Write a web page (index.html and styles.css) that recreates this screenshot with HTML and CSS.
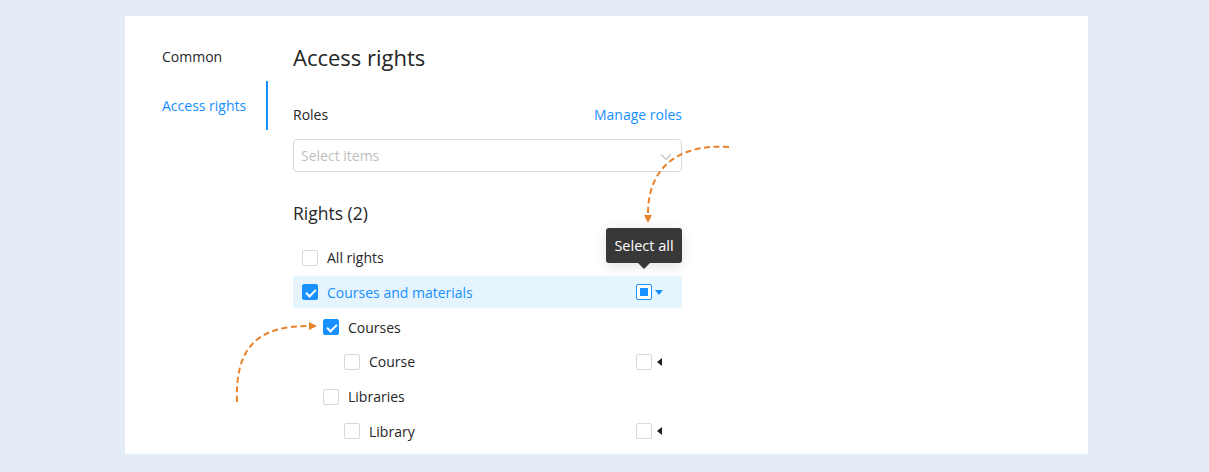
FILE: index.html
```html
<!DOCTYPE html>
<html lang="en">
<head>
<meta charset="utf-8">
<title>Access rights</title>
<link rel="stylesheet" href="styles.css">
</head>
<body>
<div class="card">
  <nav class="side-nav">
    <div class="nav-item">Common</div>
    <div class="nav-item active">Access rights</div>
  </nav>
  <main class="content">
    <h1 class="page-title">Access rights</h1>
    <div class="field-head">
      <span class="field-label">Roles</span>
      <a class="link">Manage roles</a>
    </div>
    <div class="select">
      <span class="placeholder">Select items</span>
      <svg class="chevron" width="12" height="8" viewBox="0 0 12 8"><path d="M1 1.5 L6 6.5 L11 1.5" fill="none" stroke="#c4c4c4" stroke-width="1.2"/></svg>
    </div>
    <h2 class="section-title">Rights (2)</h2>
    <div class="tree">
      <div class="row">
        <span class="cb"></span><span class="label">All rights</span>
      </div>
      <div class="row selected">
        <span class="cb checked"></span><span class="label">Courses and materials</span>
        <span class="row-tools">
          <span class="cb partial"></span><span class="caret-down"></span>
          <span class="tooltip">Select all</span>
        </span>
      </div>
      <div class="row lvl1">
        <span class="cb checked"></span><span class="label">Courses</span>
      </div>
      <div class="row lvl2">
        <span class="cb"></span><span class="label">Course</span>
        <span class="row-tools"><span class="cb"></span><span class="caret-left"></span></span>
      </div>
      <div class="row lvl1">
        <span class="cb"></span><span class="label">Libraries</span>
      </div>
      <div class="row lvl2">
        <span class="cb"></span><span class="label">Library</span>
        <span class="row-tools"><span class="cb"></span><span class="caret-left"></span></span>
      </div>
    </div>
  </main>
</div>
<svg class="hints" width="1209" height="472" viewBox="0 0 1209 472">
  <g fill="none" stroke="#e8832b" stroke-width="2" stroke-dasharray="6 3.5">
    <path d="M729 147 C 685 144, 648 162, 648 214"/>
    <path d="M237 402 C 235 350, 255 326, 308 326"/>
  </g>
  <g fill="#e8832b">
    <path d="M644 215 L652 215 L648 223 Z"/>
    <path d="M309 322 L317 326 L309 330 Z"/>
  </g>
</svg>
</body>
</html>
```
FILE: styles.css
```css
* { box-sizing: border-box; }

body {
  margin: 0;
  background: #e4ecf6;
  font-family: "Open Sans", "Noto Sans", sans-serif;
  font-size: 14px;
  color: #262626;
  position: relative;
  height: 472px;
  overflow: hidden;
}

.card {
  margin: 16px 0 0 125px;
  width: 963px;
  height: 438px;
  background: #fff;
  display: flex;
  overflow: hidden;
}

/* left menu */
.side-nav {
  width: 143px;
  padding-top: 16px;
  flex: none;
}
.nav-item {
  height: 49px;
  line-height: 49px;
  padding-left: 37px;
  font-size: 14px;
  color: #262626;
}
.nav-item.active {
  color: #1890ff;
  border-right: 2px solid #1890ff;
}

/* main column */
.content {
  width: 389px;
  margin-left: 25px;
  padding-top: 26px;
}
.page-title {
  margin: 0;
  font-size: 22px;
  font-weight: 400;
  line-height: 30px;
  color: #262626;
}
.field-head {
  margin-top: 32px;
  display: flex;
  justify-content: space-between;
  line-height: 22px;
}
.link { color: #1890ff; cursor: pointer; }

.select {
  margin-top: 13px;
  height: 33px;
  border: 1px solid #d9d9d9;
  border-radius: 4px;
  display: flex;
  align-items: center;
  justify-content: space-between;
  padding: 0 9px 0 7px;
}
.placeholder { color: #bfbfbf; }
.chevron { margin-top: 2px; }

.section-title {
  margin: 28px 0 0;
  font-size: 17.5px;
  font-weight: 400;
  line-height: 26px;
}

/* rights tree */
.tree {
  margin-top: 15.5px;
  display: flex;
  flex-direction: column;
  gap: 2.75px;
}
.row {
  height: 32px;
  display: flex;
  align-items: center;
  padding: 0 20px 0 9px;
  position: relative;
}
.row.lvl1 { padding-left: 30px; }
.row.lvl2 { padding-left: 51px; }
.row.selected { background: #e6f4fd; color: #1890ff; }
.label { margin-left: 9px; }

.cb {
  width: 16px;
  height: 16px;
  border: 1px solid #d9d9d9;
  border-radius: 2px;
  background: #fff;
  flex: none;
  position: relative;
}
.cb.checked {
  background: #1890ff;
  border-color: #1890ff;
}
.cb.checked::after {
  content: "";
  position: absolute;
  left: 4.5px;
  top: 2px;
  width: 4px;
  height: 8px;
  border: solid #fff;
  border-width: 0 2px 2px 0;
  transform: rotate(45deg);
}
.cb.partial { border-color: #1890ff; }
.cb.partial::after {
  content: "";
  position: absolute;
  left: 3px;
  top: 3px;
  width: 8px;
  height: 8px;
  background: #1890ff;
}

.row-tools {
  margin-left: auto;
  display: flex;
  align-items: center;
  position: relative;
  width: 26px;
}
.caret-left {
  margin-left: 5px;
  width: 0;
  height: 0;
  border-top: 4px solid transparent;
  border-bottom: 4px solid transparent;
  border-right: 5px solid #1f1f1f;
}
.caret-down {
  margin-left: 3px;
  width: 0;
  height: 0;
  border-left: 4px solid transparent;
  border-right: 4px solid transparent;
  border-top: 5px solid #1890ff;
}

.tooltip {
  position: absolute;
  left: -30px;
  bottom: 37px;
  width: 76px;
  height: 35px;
  line-height: 35px;
  text-align: center;
  font-size: 14.5px;
  background: #383838;
  color: #fff;
  border-radius: 3px;
  white-space: nowrap;
  box-shadow: 0 3px 14px rgba(0, 0, 0, 0.12);
}
.tooltip::after {
  content: "";
  position: absolute;
  left: 32px;
  bottom: -6px;
  border-left: 6px solid transparent;
  border-right: 6px solid transparent;
  border-top: 6px solid #383838;
}

/* dashed hint arrows drawn over the form */
.hints {
  position: absolute;
  left: 0;
  top: 0;
  pointer-events: none;
}
```
